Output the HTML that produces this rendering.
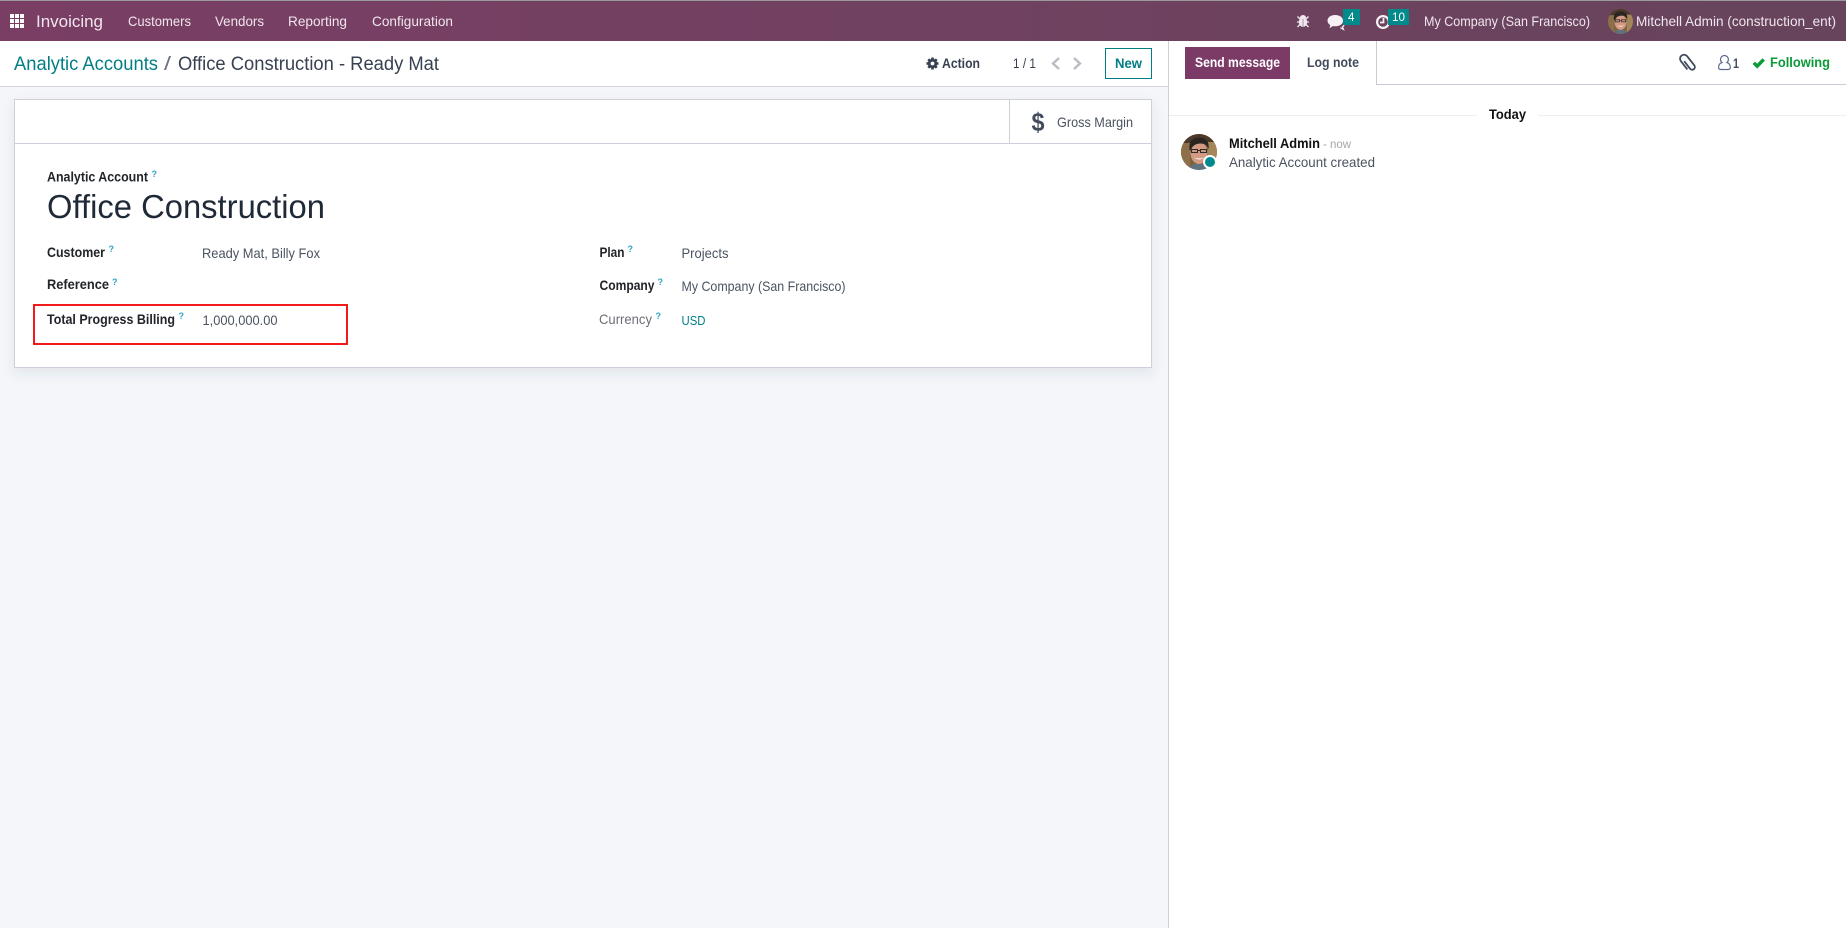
<!DOCTYPE html>
<html lang="en">
<head>
<meta charset="utf-8">
<title>Office Construction - Ready Mat</title>
<style>
html,body{margin:0;padding:0;width:1846px;height:928px;overflow:hidden;background:#f5f6fa}
svg{display:block;position:absolute;left:0;top:0}
text{font-family:"Liberation Sans",sans-serif;font-size:14px;fill:#374151;white-space:pre}
.nav{fill:#f0e6ed;font-size:14px}
.b{font-weight:700}
.lab{font-weight:700;fill:#212529}
.val{fill:#4a5360}
.q{font-size:9px;fill:#2fa3c7;font-weight:700}
.teal{fill:#017e84}
</style>
</head>
<body>
<svg width="1846" height="928" viewBox="0 0 1846 928" xmlns="http://www.w3.org/2000/svg">
<defs>
<linearGradient id="g" x1="0" x2="1" y1="0" y2="0"><stop offset="0" stop-color="#7a3e65"/><stop offset="1" stop-color="#67445c"/></linearGradient>
<filter id="sh" x="-3%" y="-10%" width="106%" height="125%"><feDropShadow dx="0" dy="5" stdDeviation="6" flood-color="#3c4664" flood-opacity=".10"/></filter>
<clipPath id="av"><circle cx="18" cy="18" r="18"/></clipPath>
<symbol id="avatar" viewBox="0 0 36 36">
<g clip-path="url(#av)">
<rect width="36" height="36" fill="#7d6242"/>
<rect x="0" y="0" width="36" height="9" fill="#4b3a2a"/>
<rect x="0" y="9" width="9" height="27" fill="#8d6f4a"/>
<rect x="27" y="8" width="9" height="28" fill="#a58658"/>
<path d="M7 36 Q10 29 18 30 Q26 29 30 36Z" fill="#61727f"/>
<ellipse cx="18" cy="19" rx="8.500" ry="11" fill="#d49a84"/>
<path d="M8.500 16 Q7 4 18 3.500 Q29 4 27.500 15 Q26 9.500 20 9.500 Q12 9.500 10 16Z" fill="#2b2522"/>
<path d="M10.500 15.500h6v3h-6zM19.500 15.500h6v3h-6zM16.500 16.500h3" fill="#c99583" stroke="#2d2a2a" stroke-width="1"/>
<path d="M13 23.500 Q18 27.500 23.500 23.500 Q18 25 13 23.500Z" fill="#f6eee9"/>
</g>
</symbol>
</defs>

<rect width="1846" height="928" fill="#f5f6fa"/>

<!-- navbar -->
<rect width="1846" height="41" fill="url(#g)"/>
<rect width="1846" height="1" fill="#9a9a9a"/>
<g fill="#fff">
<rect x="10" y="14" width="4" height="4"/><rect x="15" y="14" width="4" height="4"/><rect x="20" y="14" width="4" height="4"/>
<rect x="10" y="19" width="4" height="4"/><rect x="15" y="19" width="4" height="4"/><rect x="20" y="19" width="4" height="4"/>
<rect x="10" y="24" width="4" height="4"/><rect x="15" y="24" width="4" height="4"/><rect x="20" y="24" width="4" height="4"/>
</g>
<text x="36" y="27" class="nav" style="font-size:17px" textLength="67" lengthAdjust="spacingAndGlyphs">Invoicing</text>
<text x="128" y="26" class="nav" textLength="63" lengthAdjust="spacingAndGlyphs">Customers</text>
<text x="215" y="26" class="nav" textLength="49" lengthAdjust="spacingAndGlyphs">Vendors</text>
<text x="288" y="26" class="nav" textLength="59" lengthAdjust="spacingAndGlyphs">Reporting</text>
<text x="372" y="26" class="nav" textLength="81" lengthAdjust="spacingAndGlyphs">Configuration</text>

<!-- bug -->
<g fill="#f0e8ed" stroke="#f0e8ed">
<ellipse cx="1303" cy="22" rx="4.200" ry="5" stroke="none"/>
<path d="M1299.800 18a3.200 3 0 0 1 6.400 0z" stroke="none"/>
<path d="M1297.500 16.500l2.500 2.500M1308.500 16.500l-2.500 2.500M1297 22h3M1309 22h-3M1297.500 27l2.500-2.500M1308.500 27l-2.500-2.500" fill="none" stroke-width="1.300"/>
</g>
<rect x="1302.600" y="19" width=".8" height="8" fill="#9b7a90"/>
<!-- chat -->
<path d="M1335 15c5 0 8 2.500 8 5.700s-3 5.600-8 5.600c-.8 0-1.500 0-2.200-.2l-3.300 2 .8-3c-1.700-1-2.800-2.600-2.800-4.400 0-3.200 3-5.700 7.500-5.700z" fill="#f7f1f5"/>
<path d="M1344 22.500c.5 2-.2 3.500-1.500 4.500l1 2.500-3-1.800" fill="none" stroke="#f7f1f5" stroke-width="1.200"/>
<rect x="1343" y="9" width="17" height="16" fill="#018a8c"/>
<text x="1348" y="21" style="font-size:12px;fill:#fff" textLength="6.500" lengthAdjust="spacingAndGlyphs">4</text>
<!-- clock -->
<circle cx="1383" cy="22" r="5.900" fill="none" stroke="#f7f1f5" stroke-width="2.200"/>
<path d="M1383.500 18v4.500h-3.500" fill="none" stroke="#f7f1f5" stroke-width="1.700"/>
<rect x="1388" y="9" width="21" height="16" fill="#018a8c"/>
<text x="1392" y="21" style="font-size:12px;fill:#fff" textLength="13" lengthAdjust="spacingAndGlyphs">10</text>
<text x="1424" y="26" class="nav" textLength="166" lengthAdjust="spacingAndGlyphs">My Company (San Francisco)</text>
<use href="#avatar" x="1608" y="9" width="25" height="25"/>
<text x="1636" y="26" class="nav" textLength="200" lengthAdjust="spacingAndGlyphs">Mitchell Admin (construction_ent)</text>

<!-- control panel -->
<rect x="0" y="41" width="1168" height="45" fill="#fff"/>
<rect x="0" y="86" width="1168" height="1" fill="#d3d5de"/>
<text x="14" y="70" class="teal" style="font-size:19px" textLength="144" lengthAdjust="spacingAndGlyphs">Analytic Accounts</text>
<text x="164" y="70" style="font-size:19px;fill:#6b7280" textLength="7" lengthAdjust="spacingAndGlyphs">/</text>
<text x="178" y="70" style="font-size:19px" textLength="261" lengthAdjust="spacingAndGlyphs">Office Construction - Ready Mat</text>

<!-- gear -->
<g transform="translate(932.500,63.500)" fill="#374151">
<circle r="4.700"/>
<rect x="-1.300" y="-6" width="2.600" height="12"/><rect x="-1.300" y="-6" width="2.600" height="12" transform="rotate(45)"/><rect x="-1.300" y="-6" width="2.600" height="12" transform="rotate(90)"/><rect x="-1.300" y="-6" width="2.600" height="12" transform="rotate(135)"/>
<circle r="1.900" fill="#fff"/>
</g>
<text x="942" y="68" class="b" style="font-size:14px" textLength="38" lengthAdjust="spacingAndGlyphs">Action</text>
<text x="1013" y="68" textLength="23" lengthAdjust="spacingAndGlyphs">1 / 1</text>
<path d="M1059 58l-6 5.500 6 5.500" fill="none" stroke="#b9bcc4" stroke-width="2.400"/>
<path d="M1074 58l6 5.500-6 5.500" fill="none" stroke="#b9bcc4" stroke-width="2.400"/>
<rect x="1105.500" y="48.500" width="46" height="30" fill="#fff" stroke="#017e84"/>
<text x="1115" y="68" class="b teal" textLength="27" lengthAdjust="spacingAndGlyphs">New</text>

<!-- card -->
<rect x="14.500" y="99.500" width="1137" height="268" fill="#fff" stroke="#cfd1da" filter="url(#sh)"/>
<rect x="15" y="143" width="1136" height="1" fill="#cfd1da"/>
<rect x="1009" y="100" width="1" height="44" fill="#cfd1da"/>
<text x="1031.500" y="131" style="font-size:26px;font-weight:700;fill:#414b5c" textLength="13" lengthAdjust="spacingAndGlyphs">$</text>
<text x="1057" y="127" class="val" textLength="76" lengthAdjust="spacingAndGlyphs">Gross Margin</text>

<text x="47" y="181.500" style="fill:#212529;font-weight:700;font-size:13.500px" textLength="101" lengthAdjust="spacingAndGlyphs">Analytic Account</text>
<text x="151.500" y="177" class="q">?</text>
<text x="47" y="218" style="font-size:33px;fill:#1f2937" textLength="278" lengthAdjust="spacingAndGlyphs">Office Construction</text>

<text x="47" y="257" class="lab" textLength="58" lengthAdjust="spacingAndGlyphs">Customer</text>
<text x="108.500" y="252" class="q">?</text>
<text x="202" y="258" class="val" textLength="118" lengthAdjust="spacingAndGlyphs">Ready Mat, Billy Fox</text>

<text x="47" y="289" class="lab" textLength="62" lengthAdjust="spacingAndGlyphs">Reference</text>
<text x="112" y="285" class="q">?</text>

<text x="47" y="324" class="lab" textLength="128" lengthAdjust="spacingAndGlyphs">Total Progress Billing</text>
<text x="178.500" y="319" class="q">?</text>
<text x="202.500" y="325" class="val" textLength="75" lengthAdjust="spacingAndGlyphs">1,000,000.00</text>

<text x="599.500" y="257" class="lab" textLength="25" lengthAdjust="spacingAndGlyphs">Plan</text>
<text x="627.500" y="252" class="q">?</text>
<text x="681.500" y="258" class="val" textLength="47" lengthAdjust="spacingAndGlyphs">Projects</text>

<text x="599.500" y="290" class="lab" textLength="55" lengthAdjust="spacingAndGlyphs">Company</text>
<text x="657.500" y="285" class="q">?</text>
<text x="681.500" y="291" class="val" textLength="164" lengthAdjust="spacingAndGlyphs">My Company (San Francisco)</text>

<text x="599" y="324" style="fill:#6b6f76" textLength="53" lengthAdjust="spacingAndGlyphs">Currency</text>
<text x="655.500" y="319" class="q">?</text>
<text x="681.500" y="325" class="teal" style="font-size:13px" textLength="24" lengthAdjust="spacingAndGlyphs">USD</text>

<rect x="34" y="305" width="313" height="39" fill="none" stroke="#f00000" stroke-width="1.800"/>

<!-- chatter -->
<rect x="1168" y="41" width="678" height="887" fill="#fff"/>
<rect x="1168" y="41" width="1" height="887" fill="#cfd1da"/>
<rect x="1185" y="47" width="105" height="32" fill="#7c3a66"/>
<text x="1195" y="67" class="b" style="fill:#fff" textLength="85" lengthAdjust="spacingAndGlyphs">Send message</text>
<text x="1307" y="67" class="b" style="fill:#414b5c" textLength="52" lengthAdjust="spacingAndGlyphs">Log note</text>
<rect x="1376" y="41" width="1" height="44" fill="#c8ccd8"/>
<rect x="1376" y="84" width="470" height="1" fill="#c8ccd8"/>

<!-- paperclip -->
<g transform="rotate(-38 1688 62)"><path d="M1685.500 59v9.500a2.700 2.700 0 0 0 5.400 0v-11.500a4 4 0 0 0-8 0v10.500" fill="none" stroke="#414b5c" stroke-width="1.800"/></g>
<!-- person -->
<path d="M1724.500 55.500a3.900 3.900 0 0 1 3.900 3.900c0 1.400-.6 2.500-1.500 3.200 2.200.7 3.400 2.400 3.400 4.700 0 1.400-.9 2.200-2.200 2.200h-7.300c-1.300 0-2.200-.8-2.200-2.200 0-2.300 1.200-4 3.400-4.700-.9-.7-1.500-1.800-1.500-3.200a3.900 3.900 0 0 1 3.900-3.900z" fill="none" stroke="#5b6b8a" stroke-width="1.200"/>
<text x="1733" y="68" class="b" style="fill:#3f4d66" textLength="6" lengthAdjust="spacingAndGlyphs">1</text>
<!-- check -->
<path d="M1753.800 62.800l3.400 3.400 6.500-6.800" fill="none" stroke="#0a9a36" stroke-width="3.400"/>
<text x="1770" y="67" class="b" style="fill:#0a9a36" textLength="60" lengthAdjust="spacingAndGlyphs">Following</text>

<!-- date divider -->
<rect x="1169" y="115" width="308" height="1" fill="#eeeef1"/>
<rect x="1538" y="115" width="308" height="1" fill="#eeeef1"/>
<text x="1489" y="119" class="b" style="fill:#111" textLength="37" lengthAdjust="spacingAndGlyphs">Today</text>

<!-- message -->
<use href="#avatar" x="1181" y="134" width="36" height="36"/>
<circle cx="1210" cy="162" r="7" fill="#fff"/>
<circle cx="1210" cy="162" r="5" fill="#018a8c"/>
<text x="1229" y="148" class="b" style="fill:#111" textLength="91" lengthAdjust="spacingAndGlyphs">Mitchell Admin</text>
<text x="1323" y="148" style="font-size:12px;fill:#a3a6ab" textLength="28" lengthAdjust="spacingAndGlyphs">- now</text>
<text x="1229" y="167" class="val" textLength="146" lengthAdjust="spacingAndGlyphs">Analytic Account created</text>
</svg>
</body>
</html>
